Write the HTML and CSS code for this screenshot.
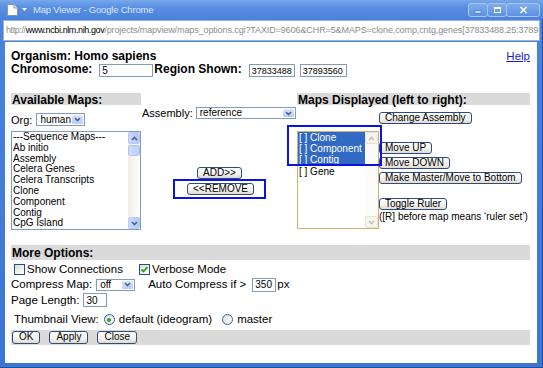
FILE: index.html
```html
<!DOCTYPE html>
<html lang="en">
<head>
    <meta charset="UTF-8">
    <title>Map Viewer</title>
    <link rel="stylesheet" href="styles.css">
</head>
<body>
<div class="window">
    <!-- title bar -->
    <div class="titlebar">
        <svg class="page-icon" width="11" height="12" viewBox="0 0 11 12"><path d="M0.5 0.5 H7 L10.5 4 V11.5 H0.5 Z" fill="#fff" stroke="#8796b4"/><path d="M7 0.5 V4 H10.5" fill="#dfe5f1" stroke="#8796b4"/></svg>
        <svg class="caret" width="5" height="3" viewBox="0 0 5 3"><path d="M0 0 H5 L2.5 3 Z" fill="#fff"/></svg>
        <span class="title">Map Viewer - Google Chrome</span>
        <div class="win-buttons">
            <span class="win-btn"><svg width="9" height="8" viewBox="0 0 9 8"><rect x="1" y="5" width="6" height="2" fill="#fff" stroke="#2c5aa8" stroke-width="0.5"/></svg></span>
            <span class="win-btn"><svg width="9" height="8" viewBox="0 0 9 8"><rect x="1.5" y="1.5" width="6" height="5" fill="none" stroke="#fff"/><rect x="1" y="1" width="7" height="2" fill="#fff"/></svg></span>
            <span class="win-btn win-close"><svg width="9" height="8" viewBox="0 0 9 8"><path d="M1.5 1 L7.5 7 M7.5 1 L1.5 7" stroke="#fff" stroke-width="1.6"/></svg></span>
        </div>
    </div>

    <!-- address bar -->
    <div class="urlbar"><span>http://</span><span class="url-host">www.ncbi.nlm.nih.gov</span><span class="url-path">/projects/mapview/maps_options.cgi?TAXID=9606&amp;CHR=5&amp;MAPS=clone,comp,cntg,genes[37833488.25:37893560.75]</span></div>

    <div class="page">
        <div class="top-row">
            <span class="label-bold">Organism: Homo sapiens</span>
            <a class="help" href="#">Help</a>
        </div>
        <div class="region-row">
            <span class="label-bold">Chromosome:</span>
            <input class="text-input chrom" type="text" value="5">
            <span class="label-bold region-label">Region Shown:</span>
            <input class="text-input region" type="text" value="37833488">
            <input class="text-input region region-end" type="text" value="37893560">
        </div>

        <!-- maps chooser -->
        <div class="maps">
            <div class="col-available">
                <div class="bar">Available Maps:</div>
                <div class="org-row">
                    <span>Org:</span>
                    <div class="select org-select">
                        <span class="select-text">human</span>
                        <span class="select-arrow"><svg width="7" height="5" viewBox="0 0 7 5"><path d="M1 1 L3.5 3.5 L6 1" fill="none" stroke="#4d6185" stroke-width="1.6"/></svg></span>
                    </div>
                </div>
                <div class="listbox available-list">
                    <div class="list-items">
                        <div>---Sequence Maps---</div>
                        <div>Ab initio</div>
                        <div>Assembly</div>
                        <div>Celera Genes</div>
                        <div>Celera Transcripts</div>
                        <div>Clone</div>
                        <div>Component</div>
                        <div>Contig</div>
                        <div>CpG Island</div>
                    </div>
                    <div class="scrollbar">
                        <span class="scroll-btn"><svg width="7" height="5" viewBox="0 0 7 5"><path d="M1 4 L3.5 1.5 L6 4" fill="none" stroke="#4d6185" stroke-width="1.6"/></svg></span>
                        <span class="scroll-thumb"></span>
                        <span class="scroll-track"></span>
                        <span class="scroll-btn"><svg width="7" height="5" viewBox="0 0 7 5"><path d="M1 1 L3.5 3.5 L6 1" fill="none" stroke="#4d6185" stroke-width="1.6"/></svg></span>
                    </div>
                </div>
            </div>

            <div class="col-middle">
                <div class="assembly-row">
                    <span>Assembly:</span>
                    <div class="select assembly-select">
                        <span class="select-text">reference</span>
                        <span class="select-arrow"><svg width="7" height="5" viewBox="0 0 7 5"><path d="M1 1 L3.5 3.5 L6 1" fill="none" stroke="#4d6185" stroke-width="1.6"/></svg></span>
                    </div>
                </div>
                <button class="btn add-btn" type="button">ADD&gt;&gt;</button>
                <div class="remove-mark"><button class="btn" type="button">&lt;&lt;REMOVE</button></div>
            </div>

            <div class="col-displayed">
                <div class="bar">Maps Displayed (left to right):</div>
                <div class="displayed-grid">
                    <button class="btn change-btn" type="button">Change Assembly</button>
                    <div class="listbox displayed-list">
                        <div class="list-items">
                            <div class="sel">[ ] Clone</div>
                            <div class="sel">[ ] Component</div>
                            <div class="sel">[ ] Contig</div>
                            <div>[ ] Gene</div>
                        </div>
                        <div class="scrollbar disabled">
                            <span class="scroll-btn"><svg width="7" height="5" viewBox="0 0 7 5"><path d="M1 4 L3.5 1.5 L6 4" fill="none" stroke="#c4c1b4" stroke-width="1.6"/></svg></span>
                            <span class="scroll-track"></span>
                            <span class="scroll-btn"><svg width="7" height="5" viewBox="0 0 7 5"><path d="M1 1 L3.5 3.5 L6 1" fill="none" stroke="#c4c1b4" stroke-width="1.6"/></svg></span>
                        </div>
                    </div>
                    <div class="move-buttons">
                        <button class="btn" type="button">Move UP</button>
                        <button class="btn" type="button">Move DOWN</button>
                        <button class="btn" type="button">Make Master/Move to Bottom</button>
                        <button class="btn toggle-btn" type="button">Toggle Ruler</button>
                        <div class="ruler-note">([R] before map means ‘ruler set’)</div>
                    </div>
                </div>
                <div class="list-mark"></div>
            </div>
        </div>

        <!-- more options -->
        <div class="bar options-bar">More Options:</div>
        <div class="opt-row opt-checks">
            <span class="cb"></span>
            <span class="cb-label">Show Connections</span>
            <span class="cb verbose-cb"><svg width="9" height="9" viewBox="0 0 9 9"><path d="M1.5 4.5 L3.5 6.5 L7.5 2" fill="none" stroke="#21a121" stroke-width="1.8"/></svg></span>
            <span class="cb-label">Verbose Mode</span>
        </div>
        <div class="opt-row">
            <span>Compress Map:</span>
            <div class="select compress-select">
                <span class="select-text">off</span>
                <span class="select-arrow"><svg width="7" height="5" viewBox="0 0 7 5"><path d="M1 1 L3.5 3.5 L6 1" fill="none" stroke="#4d6185" stroke-width="1.6"/></svg></span>
            </div>
            <span class="auto-label">Auto Compress if &gt;</span>
            <input class="text-input small-input auto-input" type="text" value="350">
            <span class="px">px</span>
        </div>
        <div class="opt-row page-row">
            <span>Page Length:</span>
            <input class="text-input small-input page-input" type="text" value="30">
        </div>
        <div class="opt-row thumb-row">
            <span>Thumbnail View:</span>
            <span class="radio checked first-radio"></span>
            <span class="radio-label">default (ideogram)</span>
            <span class="radio second-radio"></span>
            <span class="radio-label">master</span>
        </div>
        <div class="button-bar">
            <button class="btn btn-lg" type="button">OK</button>
            <button class="btn btn-lg" type="button">Apply</button>
            <button class="btn btn-lg" type="button">Close</button>
        </div>
    </div>
</div>
</body>
</html>
```

FILE: styles.css
```css
body {
    margin: 0;
    font-family: "Liberation Sans", Arial, sans-serif;
    color: #000;
}

/* window frame */
.window {
    width: 543px;
    height: 368px;
    display: flex;
    flex-direction: column;
    background: linear-gradient(#4a84dc, #3c76d3);
    box-shadow: inset -1px -1px 0 #1d4ba6;
    overflow: hidden;
}
.titlebar {
    height: 19px;
    display: flex;
    align-items: center;
    padding-left: 7px;
    background: linear-gradient(#78a7ec 0%, #5b90e2 35%, #4a83dc 100%);
}
.titlebar .caret {
    margin-left: 4px;
}
.titlebar .title {
    margin-left: 6px;
    font-size: 9.5px;
    letter-spacing: -0.2px;
    color: #dbe7fb;
}
.win-buttons {
    margin-left: auto;
    margin-right: 3px;
    display: flex;
}
.win-btn {
    width: 20px;
    height: 14px;
    box-sizing: border-box;
    border: 1px solid #a9c5f0;
    border-radius: 3px;
    background: linear-gradient(#80acee, #5c91e3);
    display: flex;
    align-items: center;
    justify-content: center;
    margin-left: -1px;
}
.win-btn.win-close {
    width: 34px;
}

/* address bar */
.urlbar {
    margin: 1px 3px 0;
    height: 21px;
    box-sizing: border-box;
    border: 1px solid #97b2dc;
    background: #fff;
    padding-left: 2px;
    font-size: 9px;
    letter-spacing: -0.4px;
    line-height: 19px;
    white-space: nowrap;
    overflow: hidden;
    color: #8c8c8c;
}
.urlbar .url-host {
    color: #000;
}
.urlbar .url-path {
    letter-spacing: -0.1px;
}

/* page body */
.page {
    flex: 1;
    margin: 1px 6px 5px 5px;
    background: #fff;
    padding: 7px 7px 0 6px;
}
.label-bold {
    font-weight: bold;
    font-size: 12px;
}
.top-row {
    display: flex;
    justify-content: space-between;
    height: 14px;
    line-height: 14px;
}
.help {
    font-size: 11.5px;
    color: #1a1ad8;
}
.region-row {
    display: flex;
    align-items: flex-start;
    height: 15px;
    line-height: 12px;
}
.text-input {
    margin: 1px 0 0;
    height: 13px;
    box-sizing: border-box;
    border: 1px solid #7f9db9;
    padding: 0 2px;
    font: 10px "Liberation Sans", Arial, sans-serif;
    color: #000;
}
.chrom {
    width: 54px;
    margin-left: 7px;
}
.region-label {
    margin-left: 1px;
}
.region {
    width: 46px;
    margin-left: 7px;
    font-size: 9px;
}
.region.region-end {
    width: 47px;
    margin-left: 5px;
}

/* gray section bars */
.bar {
    height: 12px;
    line-height: 15px;
    background: #dadada;
    font-weight: bold;
    font-size: 12px;
    padding-left: 1px;
    white-space: nowrap;
}

/* fake select boxes */
.select {
    display: flex;
    box-sizing: border-box;
    border: 1px solid #7f9db9;
    background: #fff;
    font-size: 10px;
}
.select-text {
    flex: 1;
    padding-left: 3px;
    line-height: 10px;
    white-space: nowrap;
}
.select-arrow {
    width: 11px;
    margin: 1px;
    display: flex;
    align-items: center;
    justify-content: center;
    border-radius: 1px;
    background: linear-gradient(#dbe5fd, #b7ccf8);
}

/* fake list boxes */
.listbox {
    display: flex;
    box-sizing: border-box;
    border: 1px solid #7f9db9;
    background: #fff;
    font-size: 10px;
    line-height: 10.8px;
    overflow: hidden;
}
.list-items {
    flex: 1;
    padding-left: 1px;
    white-space: nowrap;
    overflow: hidden;
}
.list-items .sel {
    background: #316ac5;
    color: #fff;
    margin-left: -1px;
    padding-left: 1px;
}
.scrollbar {
    width: 12px;
    display: flex;
    flex-direction: column;
    background: linear-gradient(90deg, #f1efe8, #fdfdfb);
}
.scroll-btn {
    height: 12px;
    box-sizing: border-box;
    border: 1px solid #b7caf5;
    border-radius: 2px;
    background: linear-gradient(90deg, #cbd9fc, #b5c9f6);
    display: flex;
    align-items: center;
    justify-content: center;
}
.scroll-thumb {
    height: 11px;
    margin-top: 1px;
    box-sizing: border-box;
    border: 1px solid #b3c6f2;
    border-radius: 2px;
    background: linear-gradient(90deg, #cfdcfc, #bccff8);
}
.scroll-track {
    flex: 1;
}
.scrollbar.disabled {
    width: 13px;
    background: #fbfbf8;
}
.scrollbar.disabled .scroll-btn {
    border-color: #e6e3d8;
    background: #f5f4ee;
}

/* buttons */
.btn {
    height: 12px;
    box-sizing: border-box;
    padding: 0 5px 1px;
    border: 1px solid #2c4d7d;
    border-radius: 3px;
    background: linear-gradient(#ffffff 0%, #f3f2ee 60%, #dcdad1 100%);
    font: 10px "Liberation Sans", Arial, sans-serif;
    line-height: 9px;
    color: #000;
    white-space: nowrap;
}
.btn.btn-lg {
    height: 13px;
    padding: 0 6px 1px;
    line-height: 10px;
}

/* maps section */
.maps {
    display: grid;
    grid-template-columns: 130px 156px 1fr;
    margin-top: 15px;
}
.org-row {
    display: flex;
    align-items: center;
    height: 15px;
    margin-top: 7px;
    font-size: 11px;
}
.org-select {
    width: 49px;
    height: 13px;
    margin-left: 4px;
}
.org-select .select-text {
    line-height: 11px;
}
.available-list {
    width: 130px;
    height: 99px;
    margin-top: 4px;
}

.col-middle {
    display: flex;
    flex-direction: column;
    padding: 14px 0 0 1px;
}
.assembly-row {
    display: flex;
    align-items: center;
    height: 12px;
    line-height: 12px;
    font-size: 11px;
}
.assembly-select {
    width: 100px;
    height: 12px;
    margin-left: 3px;
}
.add-btn {
    align-self: center;
    margin-top: 48px;
}
.remove-mark {
    align-self: center;
    border: 2px solid #0a14e0;
    padding: 2px 10px 2px 12px;
    display: flex;
}

.col-displayed {
    position: relative;
}
.displayed-grid {
    display: grid;
    grid-template-columns: 82px 1fr;
    row-gap: 7px;
    margin-top: 7px;
    align-items: start;
}
.change-btn {
    grid-column: 2;
    justify-self: start;
}
.displayed-list {
    grid-column: 1;
    height: 98px;
    border-color: #d4b06e;
    line-height: 11.2px;
}
.move-buttons {
    display: flex;
    flex-direction: column;
    align-items: flex-start;
    padding-top: 11px;
}
.move-buttons .btn + .btn {
    margin-top: 3px;
}
.move-buttons .btn.toggle-btn {
    margin-top: 14px;
}
.ruler-note {
    margin-top: 1px;
    font-size: 10px;
    line-height: 11px;
    white-space: nowrap;
}
/* annotation box drawn over the selected items */
.list-mark {
    position: absolute;
    left: -10px;
    top: 32px;
    width: 95px;
    height: 41px;
    box-sizing: border-box;
    border: 2px solid #0a14e0;
}

/* more options */
.options-bar {
    margin-top: 15px;
    height: 15px;
    line-height: 16px;
}
.opt-row {
    display: flex;
    align-items: center;
    height: 15px;
    line-height: 15px;
    font-size: 11.5px;
    white-space: nowrap;
}
.opt-checks {
    margin-top: 2px;
    padding-left: 3px;
}
.cb {
    width: 11px;
    height: 11px;
    flex: none;
    box-sizing: border-box;
    border: 1px solid #1c5180;
    background: linear-gradient(135deg, #dcdcd7, #ffffff);
    display: flex;
    align-items: center;
    justify-content: center;
}
.cb-label {
    margin-left: 2px;
}
.verbose-cb {
    margin-left: 16px;
}
.compress-select {
    width: 39px;
    height: 12px;
    margin-left: 4px;
}
.auto-label {
    margin-left: 13px;
}
.small-input {
    width: 24px;
    height: 14px;
    margin-top: 0;
}
.auto-input {
    margin-left: 6px;
}
.px {
    margin-left: 1px;
}
.page-row {
    height: 16px;
    line-height: 16px;
}
.page-input {
    margin-left: 4px;
}
.thumb-row {
    margin-top: 4px;
    padding-left: 3px;
}
.radio {
    width: 11px;
    height: 11px;
    flex: none;
    box-sizing: border-box;
    border: 1px solid #2f62a5;
    border-radius: 50%;
    background: linear-gradient(135deg, #dcdcd7, #ffffff);
    display: flex;
    align-items: center;
    justify-content: center;
}
.radio.checked::after {
    content: "";
    width: 4px;
    height: 4px;
    border-radius: 50%;
    background: #2aa52a;
}
.first-radio {
    margin-left: 5px;
}
.second-radio {
    margin-left: 10px;
}
.radio-label {
    margin-left: 4px;
}
.button-bar {
    margin-top: 3px;
    height: 15px;
    background: #dadada;
    display: flex;
    align-items: center;
    padding-left: 1px;
}
.button-bar .btn + .btn {
    margin-left: 9px;
}
```
